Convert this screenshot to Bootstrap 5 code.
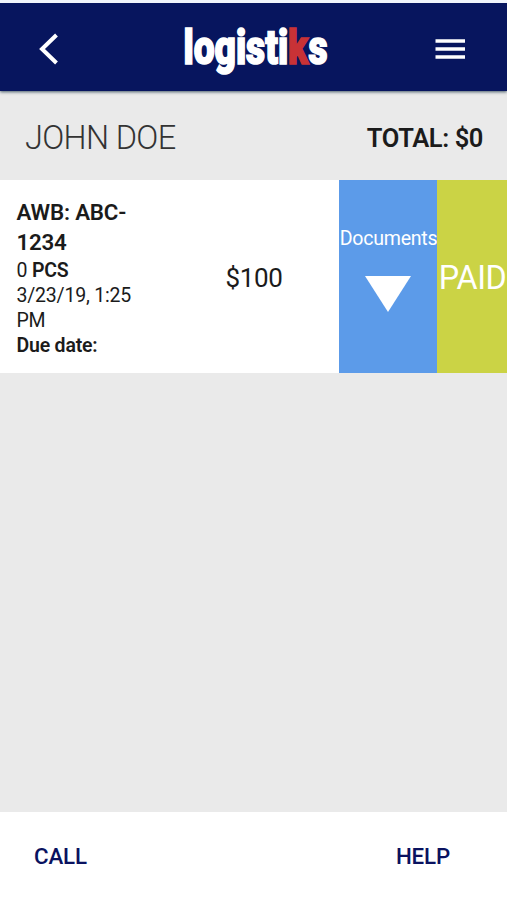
<!DOCTYPE html>
<html lang="en">
<head>
<meta charset="utf-8">
<meta name="viewport" content="width=device-width, initial-scale=1">
<title>logistiks</title>
<link href="https://cdn.jsdelivr.net/npm/bootstrap@5.3.0/dist/css/bootstrap.min.css" rel="stylesheet">
<style>
body{font-family:Roboto,"Liberation Sans",sans-serif;background:#eaeaea;color:#1b1b1b;height:900px;overflow:hidden}
.topbar{height:91px;border-top:3px solid #f0f4fb;background:#07155e;box-shadow:0 1px 3px rgba(0,30,50,.7);padding:3px 41px 0 38px}
.logo{margin-left:17px}
.summary{height:89px;padding:5px 24px 0 25px}
.customer{font-size:32.5px;font-weight:300;line-height:1;color:#333;letter-spacing:-.65px}
.total{font-size:25.5px;font-weight:600;line-height:1;letter-spacing:-.4px;padding-top:1px}
.shipment{height:193px}
.details{width:170px;padding:17px 20px 0 16.5px;font-size:19.5px;line-height:25.3px;letter-spacing:-.2px}
.awb{font-size:22.3px;line-height:30px;letter-spacing:-.2px;margin-bottom:.6px}
.details strong,.awb{font-weight:600}
.amount{width:169px;font-size:26px;letter-spacing:-.4px;padding:4px 1px 0 0}
.docs{width:98px;background:#5c9be9;font-size:19.6px;line-height:24px;letter-spacing:-.25px;padding:47px 0 0 1px}
.docs svg{margin-right:1px}
.paid{width:70px;background:#cbd345;font-size:32.3px;letter-spacing:-.4px;padding:3px 0 0 1px}
.bottombar{height:88px;padding:2px 57px 0 34px;font-size:22.3px}
.bottombar a{color:#0a1260;font-weight:500;letter-spacing:-.15px}
</style>
<script src="https://cdn.jsdelivr.net/npm/bootstrap@5.3.0/dist/js/bootstrap.bundle.min.js"></script>
</head>
<body class="d-flex flex-column m-0">
<header class="topbar d-flex align-items-center justify-content-between flex-shrink-0 position-relative">
  <a href="#" class="d-flex" aria-label="Back"><svg width="22" height="34" viewBox="0 0 22 34"><path d="M18.5 3 4 17 18.5 31" fill="none" stroke="#fff" stroke-width="4"/></svg></a>
  <svg class="logo" width="156" height="60" viewBox="0 0 156 60" role="img" aria-label="logistiks"><g transform="scale(.777 1)"><text x="7" y="44.5" font-family="Roboto" font-weight="900" font-size="47.8" fill="#fff" stroke="#fff" stroke-width="1.7">logisti<tspan fill="#c83236" stroke="#c83236">k</tspan>s</text></g></svg>
  <a href="#" class="d-flex" aria-label="Menu"><svg width="32" height="24" viewBox="0 0 32 24"><path d="M1.5 4H31M1.5 12H31M1.5 20H31" stroke="#fff" stroke-width="3.5"/></svg></a>
</header>
<section class="summary d-flex align-items-center justify-content-between flex-shrink-0">
  <span class="customer">JOHN DOE</span><span class="total">TOTAL: $0</span>
</section>
<section class="shipment d-flex bg-white flex-shrink-0">
  <div class="details"><div class="awb">AWB: ABC-<br>1234</div><div>0 <strong>PCS</strong></div><div>3/23/19, 1:25<br>PM</div><strong>Due date:</strong></div>
  <div class="amount d-flex align-items-center justify-content-center">$100</div>
  <div class="docs d-flex flex-column align-items-center text-white"><span>Documents</span><svg class="mt-4" width="46" height="37" viewBox="0 0 46 37"><path d="M0 1H46L23 37Z" fill="#fff"/></svg></div>
  <div class="paid d-flex align-items-center justify-content-center text-white">PAID</div>
</section>
<main class="flex-grow-1"></main>
<footer class="bottombar d-flex align-items-center justify-content-between bg-white flex-shrink-0"><a href="#" class="text-decoration-none">CALL</a><a href="#" class="text-decoration-none">HELP</a></footer>
</body>
</html>
